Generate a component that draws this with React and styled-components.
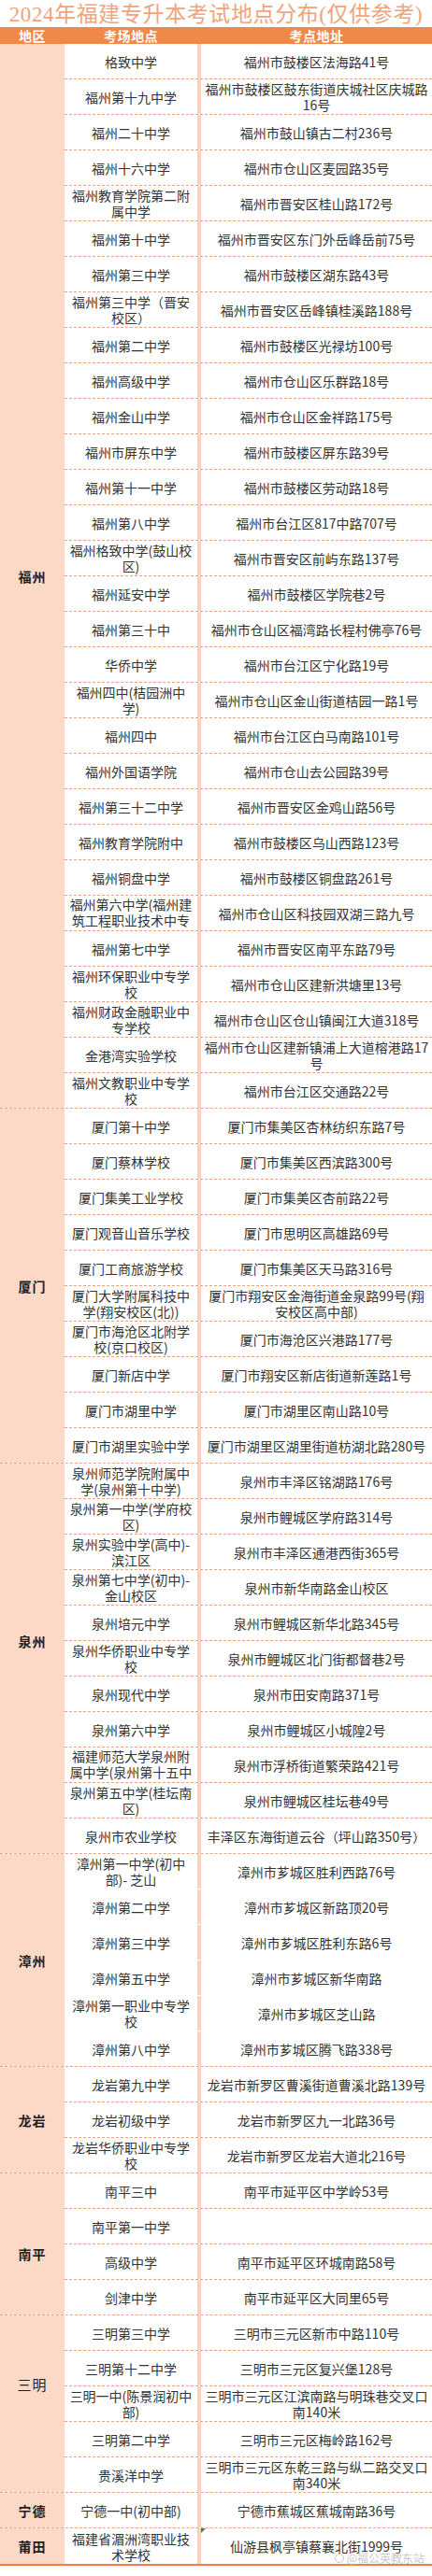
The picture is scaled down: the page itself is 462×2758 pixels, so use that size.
import React from "react";
import styled, { createGlobalStyle } from "styled-components";

const GlobalStyle = createGlobalStyle`
  html, body {
    margin: 0;
    padding: 0;
    background: #fff;
  }
  body {
    font-family: "Noto Sans CJK SC", "Noto Sans", sans-serif;
    color: #333;
  }
`;

const Page = styled.div`
  position: relative;
  width: 462px;
  padding-bottom: 11px;
  background: #fff;
`;

const Title = styled.h1`
  margin: 0;
  height: 29px;
  line-height: 32px;
  font-family: "Liberation Serif", "Noto Sans CJK SC", serif;
  font-weight: normal;
  font-size: 23px;
  letter-spacing: 0.6px;
  color: #f0a47c;
  text-align: center;
  white-space: nowrap;
  overflow: hidden;
`;

const Header = styled.div`
  display: grid;
  grid-template-columns: 69px 146px 1fr;
  height: 18px;
  background: #f0884a;
  color: #fff;
  font-weight: bold;
  font-size: 14px;
  line-height: 18px;
  letter-spacing: 0.5px;
`;

const HeadCell = styled.div`
  text-align: center;
  padding-right: ${(p) => p.$pr || 0}px;
`;

const Table = styled.div`
  border-bottom: 2px solid #ef7e40;
`;

const Group = styled.section`
  display: grid;
  grid-template-columns: 69px 1fr;
  border-bottom: ${(p) => (p.$last ? "none" : "1px dashed #e2a586")};
`;

const RegionCell = styled.div`
  display: flex;
  align-items: center;
  justify-content: center;
  background: #fcd9c6;
  font-weight: ${(p) => (p.$light ? "normal" : "bold")};
  font-size: ${(p) => (p.$light ? 15 : 14)}px;
  letter-spacing: 1px;
  color: #1e1e1e;
  padding-top: ${(p) => Math.max(p.$shift || 0, 0) * 2}px;
  padding-bottom: ${(p) => Math.max(-(p.$shift || 0), 0) * 2}px;
`;

const Rows = styled.div`
  display: flex;
  flex-direction: column;
`;

const Row = styled.div`
  display: grid;
  grid-template-columns: 142px 1fr;
  height: 38px;
  box-sizing: border-box;
  border-bottom: 1px ${(p) => (p.$plain ? "solid transparent" : "dashed #e2a586")};
  &:last-child {
    border-bottom: none;
    height: ${(p) => (p.$end ? 38 : 37)}px;
  }
`;

const Cell = styled.div`
  position: relative;
  display: flex;
  overflow: hidden;
  background: #fff;
  border-left: ${(p) => (p.$address ? "4px solid #f9d2bd" : "none")};
  padding-top: 1px;
  box-sizing: border-box;
  ${(p) =>
    p.$flag &&
    `&::before {
      content: "";
      position: absolute;
      left: 0;
      top: 0;
      border-top: 5px solid #2f8a3a;
      border-right: 5px solid transparent;
    }`}
`;

const Text = styled.span`
  margin: auto;
  white-space: pre;
  text-align: center;
  font-size: 14px;
  line-height: 17px;
  color: #333;
`;

const Watermark = styled.div`
  position: absolute;
  right: 8px;
  bottom: 12px;
  font-size: 12px;
  line-height: 14px;
  color: rgba(190, 190, 190, 0.85);
  display: flex;
  align-items: center;
  gap: 3px;
`;

const Dot = styled.span`
  width: 10px;
  height: 10px;
  border-radius: 50%;
  border: 1.5px solid rgba(190, 190, 190, 0.85);
  box-sizing: border-box;
`;

const regions = [
  {
    name: "福州",
    rows: [
      ["格致中学", "福州市鼓楼区法海路41号"],
      ["福州第十九中学", "福州市鼓楼区鼓东街道庆城社区庆城路\n16号"],
      ["福州二十中学", "福州市鼓山镇古二村236号"],
      ["福州十六中学", "福州市仓山区麦园路35号"],
      ["福州教育学院第二附\n属中学", "福州市晋安区桂山路172号"],
      ["福州第十中学", "福州市晋安区东门外岳峰岳前75号"],
      ["福州第三中学", "福州市鼓楼区湖东路43号"],
      ["福州第三中学（晋安\n校区）", "福州市晋安区岳峰镇桂溪路188号"],
      ["福州第二中学", "福州市鼓楼区光禄坊100号"],
      ["福州高级中学", "福州市仓山区乐群路18号"],
      ["福州金山中学", "福州市仓山区金祥路175号"],
      ["福州市屏东中学", "福州市鼓楼区屏东路39号"],
      ["福州第十一中学", "福州市鼓楼区劳动路18号"],
      ["福州第八中学", "福州市台江区817中路707号"],
      ["福州格致中学(鼓山校\n区)", "福州市晋安区前屿东路137号"],
      ["福州延安中学", "福州市鼓楼区学院巷2号"],
      ["福州第三十中", "福州市仓山区福湾路长程村佛亭76号"],
      ["华侨中学", "福州市台江区宁化路19号"],
      ["福州四中(桔园洲中\n学)", "福州市仓山区金山街道桔园一路1号"],
      ["福州四中", "福州市台江区白马南路101号"],
      ["福州外国语学院", "福州市仓山去公园路39号"],
      ["福州第三十二中学", "福州市晋安区金鸡山路56号"],
      ["福州教育学院附中", "福州市鼓楼区乌山西路123号"],
      ["福州铜盘中学", "福州市鼓楼区铜盘路261号"],
      ["福州第六中学(福州建\n筑工程职业技术中专\n学校)", "福州市仓山区科技园双湖三路九号"],
      ["福州第七中学", "福州市晋安区南平东路79号"],
      ["福州环保职业中专学\n校", "福州市仓山区建新洪塘里13号"],
      ["福州财政金融职业中\n专学校", "福州市仓山区仓山镇闽江大道318号"],
      ["金港湾实验学校", "福州市仓山区建新镇浦上大道榕港路17\n号"],
      ["福州文教职业中专学\n校", "福州市台江区交通路22号"],
    ],
  },
  {
    name: "厦门",
    rows: [
      ["厦门第十中学", "厦门市集美区杏林纺织东路7号"],
      ["厦门蔡林学校", "厦门市集美区西滨路300号"],
      ["厦门集美工业学校", "厦门市集美区杏前路22号"],
      ["厦门观音山音乐学校", "厦门市思明区高雄路69号"],
      ["厦门工商旅游学校", "厦门市集美区天马路316号"],
      ["厦门大学附属科技中\n学(翔安校区(北))", "厦门市翔安区金海街道金泉路99号(翔\n安校区高中部)"],
      ["厦门市海沧区北附学\n校(京口校区)", "厦门市海沧区兴港路177号"],
      ["厦门新店中学", "厦门市翔安区新店街道新莲路1号"],
      ["厦门市湖里中学", "厦门市湖里区南山路10号"],
      ["厦门市湖里实验中学", "厦门市湖里区湖里街道枋湖北路280号"],
    ],
  },
  {
    name: "泉州",
    shift: -19,
    rows: [
      ["泉州师范学院附属中\n学(泉州第十中学)", "泉州市丰泽区铭湖路176号"],
      ["泉州第一中学(学府校\n区)", "泉州市鲤城区学府路314号"],
      ["泉州实验中学(高中)-\n滨江区", "泉州市丰泽区通港西街365号"],
      ["泉州第七中学(初中)-\n金山校区", "泉州市新华南路金山校区"],
      ["泉州培元中学", "泉州市鲤城区新华北路345号"],
      ["泉州华侨职业中专学\n校", "泉州市鲤城区北门街都督巷2号"],
      ["泉州现代中学", "泉州市田安南路371号"],
      ["泉州第六中学", "泉州市鲤城区小城隍2号"],
      ["福建师范大学泉州附\n属中学(泉州第十五中\n学)", "泉州市浮桥街道繁荣路421号"],
      ["泉州第五中学(桂坛南\n区)", "泉州市鲤城区桂坛巷49号"],
      ["泉州市农业学校", "丰泽区东海街道云谷（坪山路350号）"],
    ],
  },
  {
    name: "漳州",
    plain: true,
    rows: [
      ["漳州第一中学(初中\n部)- 芝山", "漳州市芗城区胜利西路76号"],
      ["漳州第二中学", "漳州市芗城区新路顶20号"],
      ["漳州第三中学", "漳州市芗城区胜利东路6号"],
      ["漳州第五中学", "漳州市芗城区新华南路"],
      ["漳州第一职业中专学\n校", "漳州市芗城区芝山路"],
      ["漳州第八中学", "漳州市芗城区腾飞路338号"],
    ],
  },
  {
    name: "龙岩",
    rows: [
      ["龙岩第九中学", "龙岩市新罗区曹溪街道曹溪北路139号"],
      ["龙岩初级中学", "龙岩市新罗区九一北路36号"],
      ["龙岩华侨职业中专学\n校", "龙岩市新罗区龙岩大道北216号"],
    ],
  },
  {
    name: "南平",
    shift: 10,
    rows: [
      ["南平三中", "南平市延平区中学岭53号"],
      ["南平第一中学", ""],
      ["高级中学", "南平市延平区环城南路58号"],
      ["剑津中学", "南平市延平区大同里65号"],
    ],
  },
  {
    name: "三明",
    shift: -21,
    light: true,
    rows: [
      ["三明第三中学", "三明市三元区新市中路110号"],
      ["三明第十二中学", "三明市三元区复兴堡128号"],
      ["三明一中(陈景润初中\n部)", "三明市三元区江滨南路与明珠巷交叉口\n南140米"],
      ["三明第二中学", "三明市三元区梅岭路162号"],
      ["贵溪洋中学", "三明市三元区东乾三路与纵二路交叉口\n南340米"],
    ],
  },
  {
    name: "宁德",
    rows: [["宁德一中(初中部)", "宁德市蕉城区蕉城南路36号"]],
  },
  {
    name: "莆田",
    last: true,
    rows: [["福建省湄洲湾职业技\n术学校", "仙游县枫亭镇蔡襄北街1999号", true]],
  },
];

export default function App() {
  return (
    <Page>
      <GlobalStyle />
      <Title>2024年福建专升本考试地点分布(仅供参考)</Title>
      <Header>
        <HeadCell>地区</HeadCell>
        <HeadCell $pr={4}>考场地点</HeadCell>
        <HeadCell>考点地址</HeadCell>
      </Header>
      <Table>
        {regions.map((r) => (
          <Group key={r.name} $last={r.last}>
            <RegionCell $shift={r.shift} $light={r.light}>
              {r.name}
            </RegionCell>
            <Rows>
              {r.rows.map(([school, address, flag]) => (
                <Row key={school} $plain={r.plain} $end={r.last}>
                  <Cell>
                    <Text>{school}</Text>
                  </Cell>
                  <Cell $address $flag={flag}>
                    <Text>{address}</Text>
                  </Cell>
                </Row>
              ))}
            </Rows>
          </Group>
        ))}
      </Table>
      <Watermark>
        <Dot />
        @福公英教东站
      </Watermark>
    </Page>
  );
}
